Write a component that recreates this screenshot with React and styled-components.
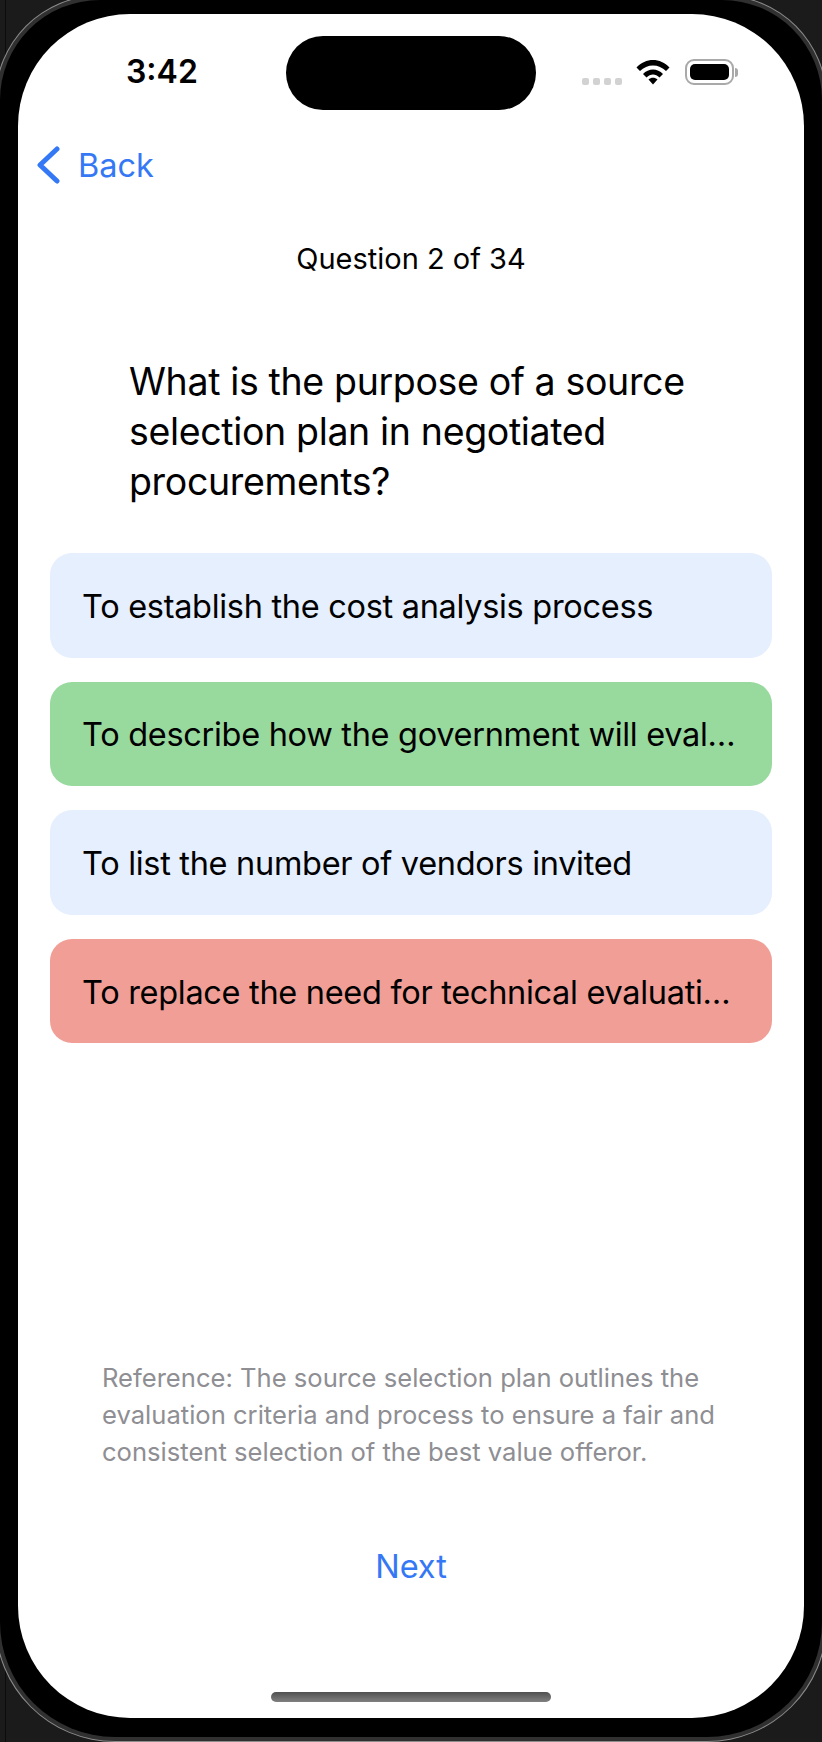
import React from 'react'
import styled, { createGlobalStyle } from 'styled-components'

const BLUE = '#3478f6'

const GlobalStyle = createGlobalStyle`
  html, body {
    margin: 0;
    padding: 0;
    width: 822px;
    height: 1742px;
    overflow: hidden;
    background:
      linear-gradient(#0c0c0c, #0c0c0c) 5px 0 / 1px 100% no-repeat,
      #1b1b1b;
  }
  body {
    font-family: Inter, "Noto Sans", sans-serif;
    -webkit-font-smoothing: antialiased;
  }
  * {
    box-sizing: border-box;
  }
`

const Device = styled.div`
  width: 822px;
  height: 1737px;
  padding: 14px 18px 19px;
  background: #000;
  border-radius: 100px 100px 115px 115px;
  box-shadow: 0 0 0 4px #303030, 0 0 0 5px #8d8d8d;
`

const Screen = styled.div`
  position: relative;
  display: flex;
  flex-direction: column;
  height: 100%;
  background: #fff;
  border-radius: 112px;
`

const StatusBar = styled.div`
  display: flex;
  align-items: flex-start;
  height: 96px;
  padding: 22px 0 0 108px;
`

const Time = styled.span`
  width: 160px;
  font-size: 32px;
  font-weight: 600;
  line-height: 72px;
  color: #000;
`

const Island = styled.div`
  width: 250px;
  height: 74px;
  background: #000;
  border-radius: 37px;
`

const StatusIcons = styled.div`
  display: flex;
  align-items: flex-start;
  margin-left: 46px;
`

const SignalDots = styled.div`
  display: flex;
  gap: 4px;
  margin: 42px 14px 0 0;
`

const Dot = styled.i`
  display: block;
  width: 7px;
  height: 7px;
  border-radius: 2px;
  background: #d2d2d2;
`

const WifiIcon = styled.svg`
  width: 34px;
  height: 26px;
  margin-top: 23px;
`

const Battery = styled.div`
  display: flex;
  align-items: center;
  margin: 23px 0 0 15px;
`

const BatteryBody = styled.div`
  width: 49px;
  height: 26px;
  padding: 3px;
  border: 2px solid #a9a9a9;
  border-radius: 9px;

  &::before {
    content: '';
    display: block;
    height: 100%;
    background: #000;
    border-radius: 5px;
  }
`

const BatteryCap = styled.i`
  display: block;
  width: 3px;
  height: 9px;
  margin-left: 1px;
  background: #a9a9a9;
  border-radius: 0 3px 3px 0;
`

const BackButton = styled.button`
  display: flex;
  align-items: center;
  align-self: flex-start;
  gap: 18px;
  height: 60px;
  margin: 25px 0 0 18px;
  padding: 0;
  border: 0;
  background: none;
  color: ${BLUE};
  font: 400 32.5px Inter, sans-serif;
`

const BackChevron = styled.svg`
  width: 24px;
  height: 38px;
`

const Counter = styled.div`
  margin-top: 46px;
  height: 36px;
  font-size: 29px;
  line-height: 36px;
  text-align: center;
  color: #000;
`

const QuestionText = styled.h1`
  margin: 80px 0 0 111px;
  width: 590px;
  font-size: 37.5px;
  font-weight: 400;
  letter-spacing: -0.35px;
  line-height: 50px;
  color: #000;
`

const Options = styled.div`
  display: flex;
  flex-direction: column;
  gap: 24px;
  margin: 46px 32px 0;
`

const tints = {
  idle: '#e5effd',
  correct: '#98d99e',
  wrong: '#f19e96',
}

const Option = styled.div`
  display: flex;
  align-items: center;
  height: 104.6px;
  padding: 2px 0 0 32px;
  border-radius: 22px;
  background: ${(p) => tints[p.$state]};
  font-size: 32.5px;
  letter-spacing: -0.3px;
  white-space: nowrap;
  color: #000;
`

const Reference = styled.p`
  margin: 317px 0 0 84px;
  width: 640px;
  font-size: 25.6px;
  line-height: 36.6px;
  color: #8e8e93;
`

const NextButton = styled.button`
  align-self: center;
  margin-top: 77px;
  padding: 0;
  border: 0;
  background: none;
  color: ${BLUE};
  font: 400 32.5px/40px Inter, sans-serif;
`

const HomeIndicator = styled.div`
  position: absolute;
  left: 253px;
  bottom: 16px;
  width: 280px;
  height: 10px;
  border-radius: 5px;
  background: linear-gradient(#505050, #808080);
`

const options = [
  { text: 'To establish the cost analysis process', state: 'idle' },
  { text: 'To describe how the government will eval…', state: 'correct' },
  { text: 'To list the number of vendors invited', state: 'idle' },
  { text: 'To replace the need for technical evaluati…', state: 'wrong' },
]

function App() {
  return (
    <>
      <GlobalStyle />
      <Device>
        <Screen>
          <StatusBar>
            <Time>3:42</Time>
            <Island />
            <StatusIcons>
              <SignalDots>
                <Dot />
                <Dot />
                <Dot />
                <Dot />
              </SignalDots>
              <WifiIcon viewBox="0 0 34 26">
                <path
                  d="M0.5 8.5C9.5 -1.5 24.5 -1.5 33.5 8.5L30 12C23 4.5 11 4.5 4 12Z"
                  fill="#000"
                />
                <path d="M7 15C12.5 9 21.5 9 27 15L23.5 18.5C19.5 14.5 14.5 14.5 10.5 18.5Z" fill="#000" />
                <path d="M12.5 20.5C15 18 19 18 21.5 20.5L17 25.5Z" fill="#000" />
              </WifiIcon>
              <Battery>
                <BatteryBody />
                <BatteryCap />
              </Battery>
            </StatusIcons>
          </StatusBar>
          <BackButton>
            <BackChevron viewBox="0 0 24 38" fill="none">
              <path d="M21 3L4 19L21 35" stroke={BLUE} strokeWidth="5" strokeLinecap="round" strokeLinejoin="round" />
            </BackChevron>
            Back
          </BackButton>
          <Counter>Question 2 of 34</Counter>
          <QuestionText>What is the purpose of a source selection plan in negotiated procurements?</QuestionText>
          <Options>
            {options.map((o) => (
              <Option key={o.text} $state={o.state}>
                {o.text}
              </Option>
            ))}
          </Options>
          <Reference>
            Reference: The source selection plan outlines the evaluation criteria and process to ensure a fair and
            consistent selection of the best value offeror.
          </Reference>
          <NextButton>Next</NextButton>
          <HomeIndicator />
        </Screen>
      </Device>
    </>
  )
}

export default App
